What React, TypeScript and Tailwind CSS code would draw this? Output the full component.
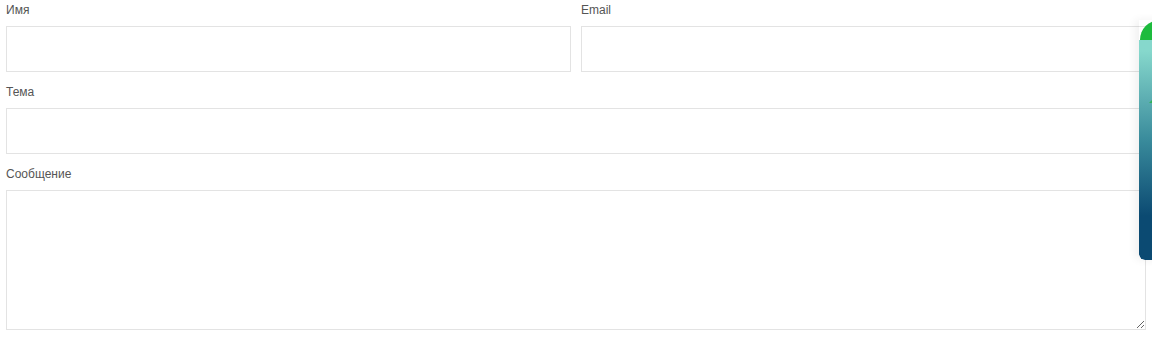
import React from "react";

function Field({ label, children }: { label: string; children: React.ReactNode }) {
    return (
        <div className="flex flex-col">
            <label className="text-[12px] leading-[20px] text-[#555] mb-[6px]">{label}</label>
            {children}
        </div>
    );
}

const inputClass = "w-full h-[46px] border border-[#e3e3e3] bg-white outline-none px-3 text-sm";

export default function App() {
    return (
        <div className="relative w-[1152px] h-[337px] overflow-hidden bg-white" style={{ fontFamily: '"Liberation Sans", Arial, sans-serif' }}>
            <form className="w-[1140px] ml-[6px] flex flex-col gap-[10px]">
                <div className="grid grid-cols-2 gap-[10px]">
                    <Field label="Имя">
                        <input className={inputClass} />
                    </Field>
                    <Field label="Email">
                        <input className={inputClass} type="email" />
                    </Field>
                </div>
                <Field label="Тема">
                    <input className={inputClass} />
                </Field>
                <Field label="Сообщение">
                    <textarea className="w-full h-[140px] border border-[#e3e3e3] bg-white outline-none px-3 py-2 text-sm block" />
                </Field>
            </form>

            {/* floating widget, mostly off-screen */}
            <div className="absolute left-[1139px] top-[20px] w-[40px] h-[240px] flex flex-col shadow-[-4px_0_8px_rgba(0,0,0,0.06)] rounded-bl-[6px] overflow-hidden">
                <div className="h-[20px] bg-[#1dbb3e] rounded-tl-[22px] ml-[1px]" />
                <div className="relative flex-1 bg-gradient-to-b from-[#86d8cc] from-5% via-[#3a8c9c] via-45% to-[#0b4a72] to-80% rounded-bl-[6px]">
                    <div className="absolute left-[10px] top-[59px] w-0 h-0 border-l-[4px] border-r-[4px] border-b-[4px] border-l-transparent border-r-transparent border-b-[#2fb357]" />
                </div>
            </div>
        </div>
    );
}
